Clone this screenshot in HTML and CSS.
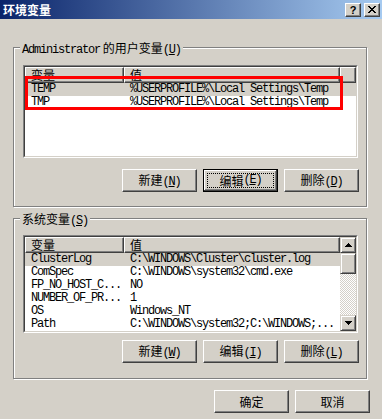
FILE: index.html
```html
<!DOCTYPE html>
<html lang="zh-CN">
<head>
  <meta charset="UTF-8">
  <title>环境变量</title>
  <link rel="stylesheet" href="styles.css">
</head>
<body>
  <div class="window">
    <div class="titlebar">
      <span class="title">环境变量</span>
      <div class="cap-buttons">
        <button class="cap-btn help">?</button>
        <button class="cap-btn close">
          <svg width="8" height="7" viewBox="0 0 8 7">
            <path d="M0 0h2v1h1v1h2v-1h1v-1h2v1h-1v1h-1v1h-1v1h1v1h1v1h1v1h-2v-1h-1v-1h-2v1h-1v1h-2v-1h1v-1h1v-1h1v-1h-1v-1h-1v-1h-1z" fill="#000"/>
          </svg>
        </button>
      </div>
    </div>

    <div class="content">
      <div class="group">
        <div class="group-label"><span class="mono">Administrator</span> 的用户变量<span class="mono">(<u>U</u>)</span></div>
        <div class="list list-user">
          <div class="list-inner">
            <div class="list-main">
              <div class="list-head">
                <div class="head-cell col-name">变量</div>
                <div class="head-cell col-value">值</div>
                <div class="head-cell col-rest"></div>
              </div>
              <div class="row selected"><span class="cell-name">TEMP</span><span class="cell-value">%USERPROFILE%\Local Settings\Temp</span></div>
              <div class="row"><span class="cell-name">TMP</span><span class="cell-value">%USERPROFILE%\Local Settings\Temp</span></div>
            </div>
          </div>
          <div class="mark"></div>
        </div>
        <div class="btn-row">
          <button class="btn">新建<span class="mono">(<u>N</u>)</span></button>
          <button class="btn default"><span class="focus">编辑<span class="mono">(<u>E</u>)</span></span></button>
          <button class="btn">删除<span class="mono">(<u>D</u>)</span></button>
        </div>
      </div>

      <div class="group group-system">
        <div class="group-label">系统变量<span class="mono">(<u>S</u>)</span></div>
        <div class="list list-system">
          <div class="list-inner">
            <div class="list-main">
              <div class="list-head">
                <div class="head-cell col-name">变量</div>
                <div class="head-cell col-value">值</div>
              </div>
              <div class="row selected"><span class="cell-name">ClusterLog</span><span class="cell-value">C:\WINDOWS\Cluster\cluster.log</span></div>
              <div class="row"><span class="cell-name">ComSpec</span><span class="cell-value">C:\WINDOWS\system32\cmd.exe</span></div>
              <div class="row"><span class="cell-name">FP_NO_HOST_C...</span><span class="cell-value">NO</span></div>
              <div class="row"><span class="cell-name">NUMBER_OF_PR...</span><span class="cell-value">1</span></div>
              <div class="row"><span class="cell-name">OS</span><span class="cell-value">Windows_NT</span></div>
              <div class="row"><span class="cell-name">Path</span><span class="cell-value">C:\WINDOWS\system32;C:\WINDOWS;...</span></div>
            </div>
            <div class="scrollbar">
              <div class="sb-btn">
                <svg width="7" height="4" viewBox="0 0 7 4"><path d="M3 0h1v1h1v1h1v1h1v1h-7v-1h1v-1h1v-1h1z" fill="#000"/></svg>
              </div>
              <div class="sb-thumb"></div>
              <div class="sb-track"></div>
              <div class="sb-btn">
                <svg width="7" height="4" viewBox="0 0 7 4"><path d="M0 0h7v1h-1v1h-1v1h-1v1h-1v-1h-1v-1h-1v-1h-1z" fill="#000"/></svg>
              </div>
            </div>
          </div>
        </div>
        <div class="btn-row">
          <button class="btn">新建<span class="mono">(<u>W</u>)</span></button>
          <button class="btn">编辑<span class="mono">(<u>I</u>)</span></button>
          <button class="btn">删除<span class="mono">(<u>L</u>)</span></button>
        </div>
      </div>

      <div class="footer">
        <button class="btn">确定</button>
        <button class="btn">取消</button>
      </div>
    </div>
  </div>
</body>
</html>
```

FILE: styles.css
```css
body {
  margin: 0;
  background: #d4d0c8;
  font-family: "Noto Sans CJK SC", sans-serif;
  font-size: 12px;
  color: #000;
}

.window {
  width: 382px;
  height: 419px;
  background: #d4d0c8;
  overflow: hidden;
}

.mono {
  font-family: "Liberation Mono", monospace;
  font-size: 12px;
  letter-spacing: -1.2px;
}

/* title bar */
.titlebar {
  height: 19px;
  display: flex;
  align-items: center;
  justify-content: space-between;
  padding: 0 2px 0 3px;
  background: linear-gradient(to right, #0a246a, #a6caf0);
}

.title {
  color: #fff;
  font-weight: bold;
  line-height: 13px;
}

.cap-buttons {
  display: flex;
  gap: 3px;
}

.cap-btn {
  width: 16px;
  height: 14px;
  box-sizing: border-box;
  margin: 0;
  padding: 0;
  border: 1px solid;
  border-color: #fff #404040 #404040 #fff;
  box-shadow: inset -1px -1px #808080;
  background: #d4d0c8;
  display: flex;
  align-items: center;
  justify-content: center;
}

.cap-btn.help {
  font-family: "Liberation Sans", sans-serif;
  font-weight: bold;
  font-size: 11px;
  line-height: 10px;
}

/* dialog body */
.content {
  padding: 28px 12px 0 13px;
}

.group {
  border: 1px solid #808080;
  box-shadow: inset 1px 1px #fff, 1px 1px #fff;
  padding: 0 8px 14px 9px;
  margin-right: 3px;
}

.group-system {
  margin-top: 11px;
  padding-bottom: 15px;
}

.group-label {
  width: fit-content;
  margin: -7px 0 0 -3px;
  padding: 0 2px;
  background: #d4d0c8;
  line-height: 13px;
}

/* list views */
.list {
  position: relative;
  box-sizing: border-box;
  margin-top: 8px;
  border: 1px solid;
  border-color: #808080 #fff #fff #808080;
}

.list-user {
  height: 93px;
}

.list-system {
  height: 98px;
  margin-top: 7px;
}

.list-inner {
  height: 100%;
  box-sizing: border-box;
  border: 1px solid;
  border-color: #404040 #d4d0c8 #d4d0c8 #404040;
  background: #fff;
  display: flex;
  overflow: hidden;
}

.list-main {
  flex: 1;
  min-width: 0;
}

.list-head {
  display: flex;
  height: 16px;
}

.head-cell {
  box-sizing: border-box;
  border: 1px solid;
  border-color: #fff #404040 #404040 #fff;
  box-shadow: inset -1px -1px #808080;
  background: #d4d0c8;
  padding-left: 5px;
  line-height: 14px;
  white-space: nowrap;
}

.col-name {
  width: 99px;
}

.col-value {
  width: 216px;
}

.col-rest {
  flex: 1;
}

.row {
  display: flex;
  height: 13px;
  line-height: 13px;
  font-family: "Liberation Mono", monospace;
  font-size: 12px;
  letter-spacing: -1.2px;
  white-space: nowrap;
}

.row.selected {
  background: #d4d0c8;
}

.cell-name {
  width: 99px;
  box-sizing: border-box;
  padding-left: 6px;
  flex-shrink: 0;
}

.cell-value {
  padding-left: 6px;
}

/* red annotation box */
.mark {
  position: absolute;
  left: 1px;
  top: 10px;
  width: 318px;
  height: 34px;
  box-sizing: border-box;
  border: 3px solid #f00;
}

/* scrollbar */
.scrollbar {
  width: 16px;
  display: flex;
  flex-direction: column;
  background: repeating-conic-gradient(#d4d0c8 0 25%, #fff 0 50%) 0 0 / 2px 2px;
}

.sb-btn,
.sb-thumb {
  box-sizing: border-box;
  border: 1px solid;
  border-color: #d4d0c8 #404040 #404040 #d4d0c8;
  box-shadow: inset 1px 1px #fff, inset -1px -1px #808080;
  background: #d4d0c8;
}

.sb-btn {
  height: 16px;
  display: flex;
  align-items: center;
  justify-content: center;
}

.sb-thumb {
  height: 21px;
}

.sb-track {
  flex: 1;
}

/* push buttons */
.btn-row {
  display: flex;
  justify-content: flex-end;
  gap: 6px;
  margin-top: 11px;
  margin-right: -1px;
}

.group-system .btn-row {
  margin-top: 7px;
}

.btn {
  width: 75px;
  height: 23px;
  box-sizing: border-box;
  margin: 0;
  padding: 0;
  border: 1px solid;
  border-color: #fff #404040 #404040 #fff;
  box-shadow: inset -1px -1px #808080;
  background: #d4d0c8;
  font-family: "Noto Sans CJK SC", sans-serif;
  font-size: 12px;
  line-height: 13px;
  color: #000;
}

.btn.default {
  padding: 3px;
  border-color: #000;
  box-shadow: inset -1px -1px #404040, inset 1px 1px #fff, inset -2px -2px #808080;
}

.focus {
  display: flex;
  align-items: center;
  justify-content: center;
  height: 100%;
  box-sizing: border-box;
  border: 1px dotted #000;
}

.footer {
  display: flex;
  justify-content: flex-end;
  gap: 6px;
  margin-top: 11px;
}
```
